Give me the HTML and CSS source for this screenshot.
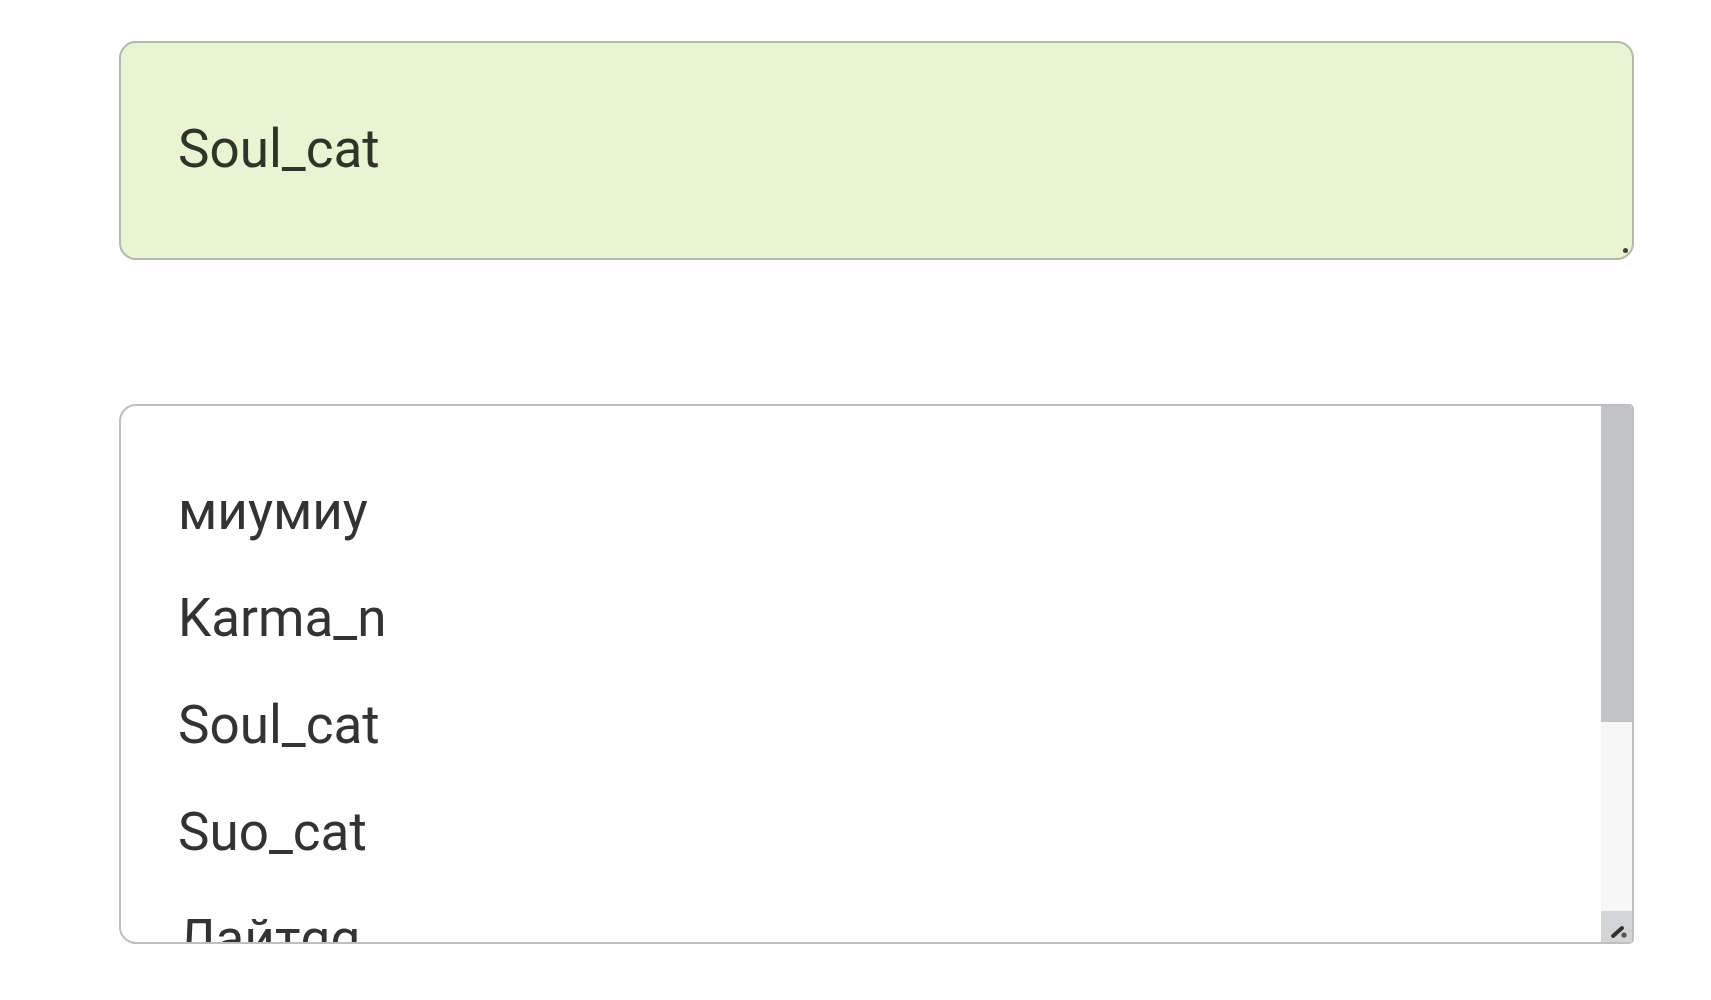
FILE: index.html
```html
<!DOCTYPE html>
<html lang="ru">
<head>
    <meta charset="UTF-8">
    <meta name="viewport" content="width=device-width, initial-scale=1.0">
    <title>Выбор пользователя</title>
    <link rel="stylesheet" href="styles.css">
</head>
<body>
    <div class="page">
        <div class="selected-user" id="selected-user">
            <span class="selected-name">Soul_cat</span>
        </div>
        <div class="user-list-box">
            <ul class="user-list" id="user-list">
                <li>миумиу</li>
                <li>Karma_n</li>
                <li>Soul_cat</li>
                <li>Suo_cat</li>
                <li>Лайтqq</li>
                <li>Мурзик</li>
                <li>Tom_cat</li>
            </ul>
            <div class="list-scrollbar">
                <div class="scroll-thumb"></div>
                <div class="scroll-track"></div>
                <div class="list-corner">
                    <svg width="31" height="31" viewBox="0 0 31 31">
                        <path d="M12 25 L21 17" stroke="#333" stroke-width="4" stroke-linecap="round"/>
                        <circle cx="23" cy="24" r="2.6" fill="#555"/>
                    </svg>
                </div>
            </div>
        </div>
    </div>
</body>
</html>
```

FILE: styles.css
```css
body {
    margin: 0;
    padding: 0;
    background-color: #ffffff;
    font-family: Roboto, "Noto Sans", Arial, sans-serif;
}
.page {
    padding: 41px 0 0 119px;
    width: 1515px;
}
.selected-user {
    position: relative;
    box-sizing: border-box;
    height: 219px;
    display: flex;
    align-items: center;
    padding: 0 0 4px 57px;
    background-color: #e7f5d3;
    border: 2px solid #b3b9ac;
    border-radius: 17px;
}
.selected-name {
    font-size: 53px;
    color: #2c3528;
}
/* little grip dot of the resizable field */
.selected-user::after {
    content: "";
    position: absolute;
    right: 4px;
    bottom: 5px;
    width: 5px;
    height: 5px;
    border-radius: 50%;
    background-color: #3c4238;
}
.user-list-box {
    display: flex;
    box-sizing: border-box;
    height: 540px;
    margin-top: 144px;
    border: 2px solid #bfbfbf;
    border-radius: 17px 5px 5px 17px;
    overflow: hidden;
    background-color: #ffffff;
}
.user-list {
    flex: 1;
    list-style: none;
    margin: 0;
    padding: 52px 0 0 57px;
    overflow: hidden;
}
.user-list li {
    font-size: 53px;
    line-height: 107px;
    color: #333333;
}
.list-scrollbar {
    width: 31px;
    display: flex;
    flex-direction: column;
}
.scroll-thumb {
    height: 316px;
    background-color: #c3c4c7;
}
.scroll-track {
    flex: 1;
    background-color: #f7f7f7;
}
.list-corner {
    height: 31px;
    background-color: #d3d4d6;
}
.list-corner svg {
    display: block;
}
```
